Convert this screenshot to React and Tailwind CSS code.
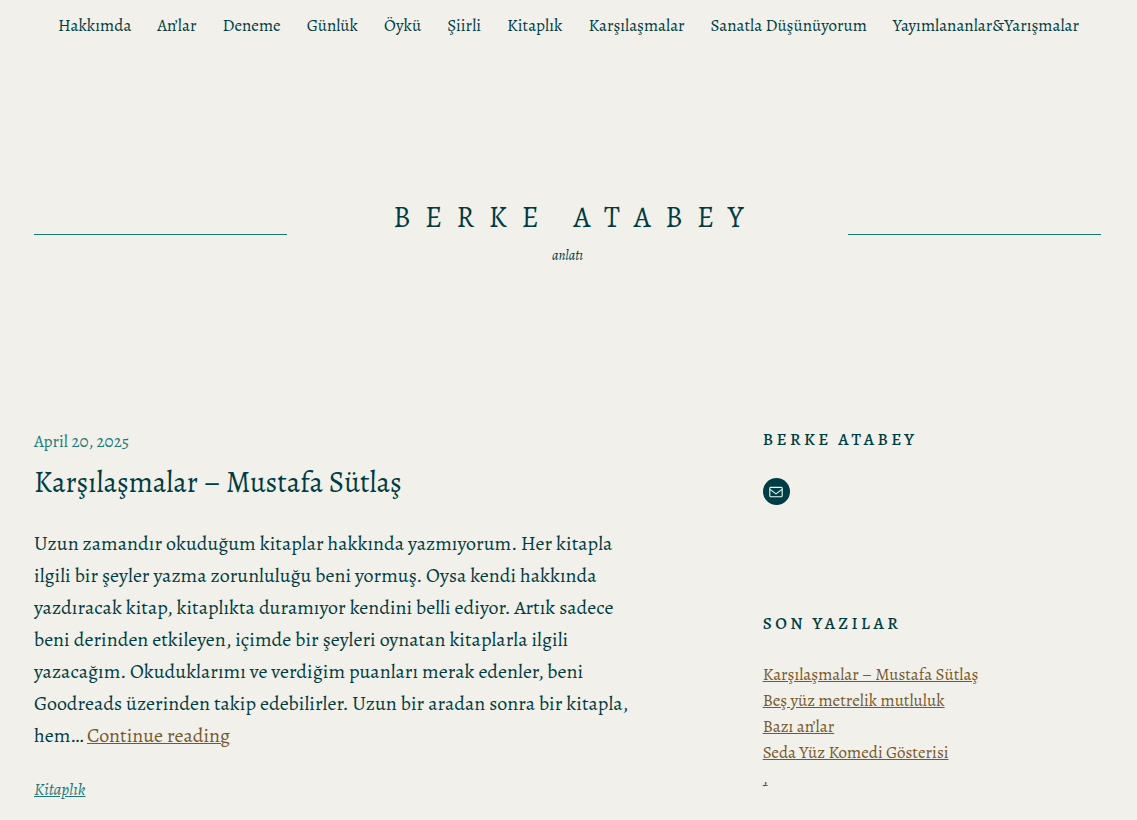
const navItems = [
  "Hakkımda", "An’lar", "Deneme", "Günlük", "Öykü", "Şiirli", "Kitaplık",
  "Karşılaşmalar", "Sanatla Düşünüyorum", "Yayımlananlar&Yarışmalar",
];

const recentPosts = [
  "Karşılaşmalar – Mustafa Sütlaş",
  "Beş yüz metrelik mutluluk",
  "Bazı an’lar",
  "Seda Yüz Komedi Gösterisi",
];

function MailIcon() {
  return (
    <svg viewBox="0 0 24 24" className="h-[18px] w-[18px]" fill="currentColor" aria-hidden="true">
      <path d="M19 5H5c-1.1 0-2 .9-2 2v10c0 1.1.9 2 2 2h14c1.1 0 2-.9 2-2V7c0-1.1-.9-2-2-2zm.5 12c0 .3-.2.5-.5.5H5c-.3 0-.5-.2-.5-.5V9.800l7.500 5.600 7.500-5.600V17zm0-9.100L12 13.600 4.500 7.900V7c0-.3.2-.5.5-.5h14c.3 0 .5.2.5.5v.9z" />
    </svg>
  );
}

export default function App() {
  return (
    <div className="min-h-screen bg-[#f1f0ea] font-['Alegreya','Liberation_Serif',serif] text-[#003c43]">
      <nav aria-label="Main" className="px-8 pt-3">
        <ul className="flex flex-wrap justify-center gap-x-[26px] text-[17px] leading-7">
          {navItems.map((item) => (
            <li key={item}><a href="#">{item}</a></li>
          ))}
        </ul>
      </nav>

      <header className="mt-40 grid grid-cols-[1fr_2fr_1fr] items-center gap-7 px-[34px] pr-9">
        <hr className="border-[#1a7a7b]" />
        <div className="text-center">
          <h1 className="pl-4 text-[29px] leading-9 tracking-[0.5em] uppercase"><a href="#">Berke Atabey</a></h1>
          <p className="mt-2 text-sm leading-6 italic">anlatı</p>
        </div>
        <hr className="border-[#1a7a7b]" />
      </header>

      <div className="mt-[162px] grid grid-cols-[2fr_1fr] gap-13 px-[34px] pr-9 pb-4">
        <main>
          <article>
            <time dateTime="2025-04-20" className="block text-[17px] leading-6 text-[#1a7a7b]">April 20, 2025</time>
            <h2 className="mt-[11px] text-[29px] leading-9"><a href="#">Karşılaşmalar – Mustafa Sütlaş</a></h2>
            <p className="mt-[27px] max-w-[610px] text-[20px] leading-8">
              Uzun zamandır okuduğum kitaplar hakkında yazmıyorum. Her kitapla ilgili bir şeyler yazma
              zorunluluğu beni yormuş. Oysa kendi hakkında yazdıracak kitap, kitaplıkta duramıyor kendini
              belli ediyor. Artık sadece beni derinden etkileyen, içimde bir şeyleri oynatan kitaplarla ilgili
              yazacağım. Okuduklarımı ve verdiğim puanları merak edenler, beni Goodreads üzerinden takip
              edebilirler. Uzun bir aradan sonra bir kitapla, hem…{" "}
              <a href="#" className="text-[#77592c] underline decoration-1">Continue reading</a>
            </p>
            <p className="mt-[26px] text-[17px] leading-6 text-[#1a7a7b] italic">
              <a href="#" className="underline">Kitaplık</a>
            </p>
          </article>
        </main>

        <aside>
          <h2 className="text-[17px] leading-5 font-medium tracking-[0.2em] uppercase">Berke Atabey</h2>
          <a href="#" aria-label="Mail" className="mt-7 flex size-[27px] items-center justify-center rounded-full bg-[#003c43] text-[#e3fef7]">
            <MailIcon />
          </a>
          <h2 className="mt-[109px] text-[17px] leading-5 font-medium tracking-[0.2em] uppercase">Son Yazılar</h2>
          <ul className="mt-7 text-[17px] leading-[26px] text-[#77592c]">
            {recentPosts.map((post) => (
              <li key={post}><a href="#" className="underline">{post}</a></li>
            ))}
            <li><a href="#" className="underline [text-decoration-skip-ink:none]">,</a></li>
          </ul>
        </aside>
      </div>
    </div>
  );
}
